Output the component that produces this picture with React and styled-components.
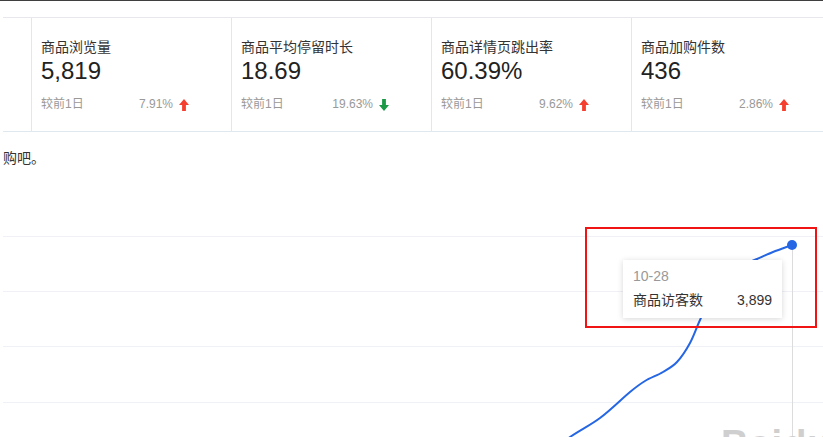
import React from "react";
import styled, { createGlobalStyle } from "styled-components";

const Global = createGlobalStyle`
  html, body { margin: 0; padding: 0; background: #fff; }
  body {
    font-family: "Liberation Sans", "Noto Sans CJK SC", sans-serif;
    color: #333;
    overflow: hidden;
  }
`;

const Page = styled.div`
  width: 823px;
  height: 437px;
  overflow: hidden;
  position: relative;
  background: #fff;
`;

const TopRule = styled.div`
  height: 1px;
  background: #3f3f3f;
`;

const Body = styled.div`
  padding: 16px 0 0 3px;
`;

const StatsRow = styled.div`
  display: flex;
  overflow: hidden;
  border-top: 1px solid #e6e8eb;
  border-bottom: 1px solid #dfe7ef;
`;

const StubCard = styled.div`
  flex: 0 0 28px;
  border-right: 1px solid #dfe7ef;
`;

const Card = styled.div`
  flex: 0 0 auto;
  width: 190px;
  border-right: 1px solid #dfe7ef;
  padding: 20px 0 18px 9px;
  display: flex;
  flex-direction: column;
`;

const CardTitle = styled.div`
  font-size: 14px;
  line-height: 19px;
  color: #333;
  white-space: nowrap;
`;

const CardValue = styled.div`
  font-size: 24px;
  line-height: 28px;
  color: #222;
`;

const CardFoot = styled.div`
  margin-top: 11px;
  width: 148px;
  display: flex;
  justify-content: space-between;
  align-items: center;
  font-size: 12px;
  line-height: 17px;
  color: #999;
`;

const Trend = styled.span`
  display: flex;
  align-items: center;
  gap: 6px;
`;

const Notice = styled.div`
  margin-top: 16px;
  font-size: 14px;
  line-height: 20px;
  color: #333;
`;

const Chart = styled.div`
  position: relative;
  height: 269px;
`;

const ChartSvg = styled.svg`
  display: block;
  width: 823px;
  height: 269px;
`;

const Watermark = styled.span`
  position: absolute;
  left: 721px;
  top: 255px;
  font-size: 38px;
  font-weight: bold;
  color: #cfcfcf;
  letter-spacing: 1px;
  white-space: nowrap;
`;

const Tooltip = styled.div`
  position: absolute;
  left: 623px;
  top: 92px;
  width: 159px;
  height: 58px;
  box-sizing: border-box;
  padding: 6px 10px 8px 10px;
  background: #fff;
  box-shadow: 0 1px 6px rgba(0, 0, 0, 0.16);
  font-size: 14px;
`;

const TipDate = styled.div`
  line-height: 20px;
  color: #999;
`;

const TipRow = styled.div`
  margin-top: 4px;
  line-height: 20px;
  display: flex;
  justify-content: space-between;
  color: #333;
`;

const Highlight = styled.div`
  position: absolute;
  left: 585px;
  top: 59px;
  width: 232px;
  height: 101px;
  box-sizing: border-box;
  border: 2px solid #f01414;
`;

const Arrow = ({ up }) => (
  <svg width="10" height="12" viewBox="0 0 10 12">
    {up ? (
      <path d="M5 0 L10 6 L6.9 6 L6.9 12 L3.1 12 L3.1 6 L0 6 Z" fill="#f5402f" />
    ) : (
      <path d="M5 12 L10 6 L6.9 6 L6.9 0 L3.1 0 L3.1 6 L0 6 Z" fill="#1c9a48" />
    )}
  </svg>
);

const stats = [
  { title: "商品浏览量", value: "5,819", pct: "7.91%", up: true },
  { title: "商品平均停留时长", value: "18.69", pct: "19.63%", up: false },
  { title: "商品详情页跳出率", value: "60.39%", pct: "9.62%", up: true },
  { title: "商品加购件数", value: "436", pct: "2.86%", up: true },
];

const points = [
  [530, 298], [570, 269], [600, 250], [630, 224], [645, 213], [663, 204],
  [677, 194], [690, 175], [700, 152], [713, 125], [727, 105], [757, 91],
  [773, 84], [792, 77],
];

function smoothPath(pts) {
  let d = `M${pts[0][0]},${pts[0][1]}`;
  for (let i = 0; i < pts.length - 1; i++) {
    const p0 = pts[i - 1] || pts[i];
    const p1 = pts[i];
    const p2 = pts[i + 1];
    const p3 = pts[i + 2] || p2;
    const c1x = p1[0] + (p2[0] - p0[0]) / 6;
    const c1y = p1[1] + (p2[1] - p0[1]) / 6;
    const c2x = p2[0] - (p3[0] - p1[0]) / 6;
    const c2y = p2[1] - (p3[1] - p1[1]) / 6;
    d += ` C${c1x.toFixed(1)},${c1y.toFixed(1)} ${c2x.toFixed(1)},${c2y.toFixed(1)} ${p2[0]},${p2[1]}`;
  }
  return d;
}

const gridYs = [68.5, 123.5, 178.5, 234.5];

export default function App() {
  return (
    <Page>
      <Global />
      <TopRule />
      <Body>
        <StatsRow>
          <StubCard />
          {stats.map((s) => (
            <Card key={s.title}>
              <CardTitle>{s.title}</CardTitle>
              <CardValue>{s.value}</CardValue>
              <CardFoot>
                <span>较前1日</span>
                <Trend>
                  {s.pct}
                  <Arrow up={s.up} />
                </Trend>
              </CardFoot>
            </Card>
          ))}
        </StatsRow>
        <Notice>购吧。</Notice>
      </Body>
      <Chart>
        <ChartSvg viewBox="0 0 823 269">
          {gridYs.map((y) => (
            <line key={y} x1="3" x2="823" y1={y} y2={y} stroke="#eff1f7" strokeWidth="1" />
          ))}
          <line x1="792.5" x2="792.5" y1="77" y2="269" stroke="#dcdcdc" strokeWidth="1" />
          <path d={smoothPath(points)} fill="none" stroke="#2566e4" strokeWidth="2" />
          <circle cx="792" cy="77" r="5" fill="#2566e4" />
        </ChartSvg>
        <Watermark>Baidu</Watermark>
        <Tooltip>
          <TipDate>10-28</TipDate>
          <TipRow>
            <span>商品访客数</span>
            <span>3,899</span>
          </TipRow>
        </Tooltip>
        <Highlight />
      </Chart>
    </Page>
  );
}
